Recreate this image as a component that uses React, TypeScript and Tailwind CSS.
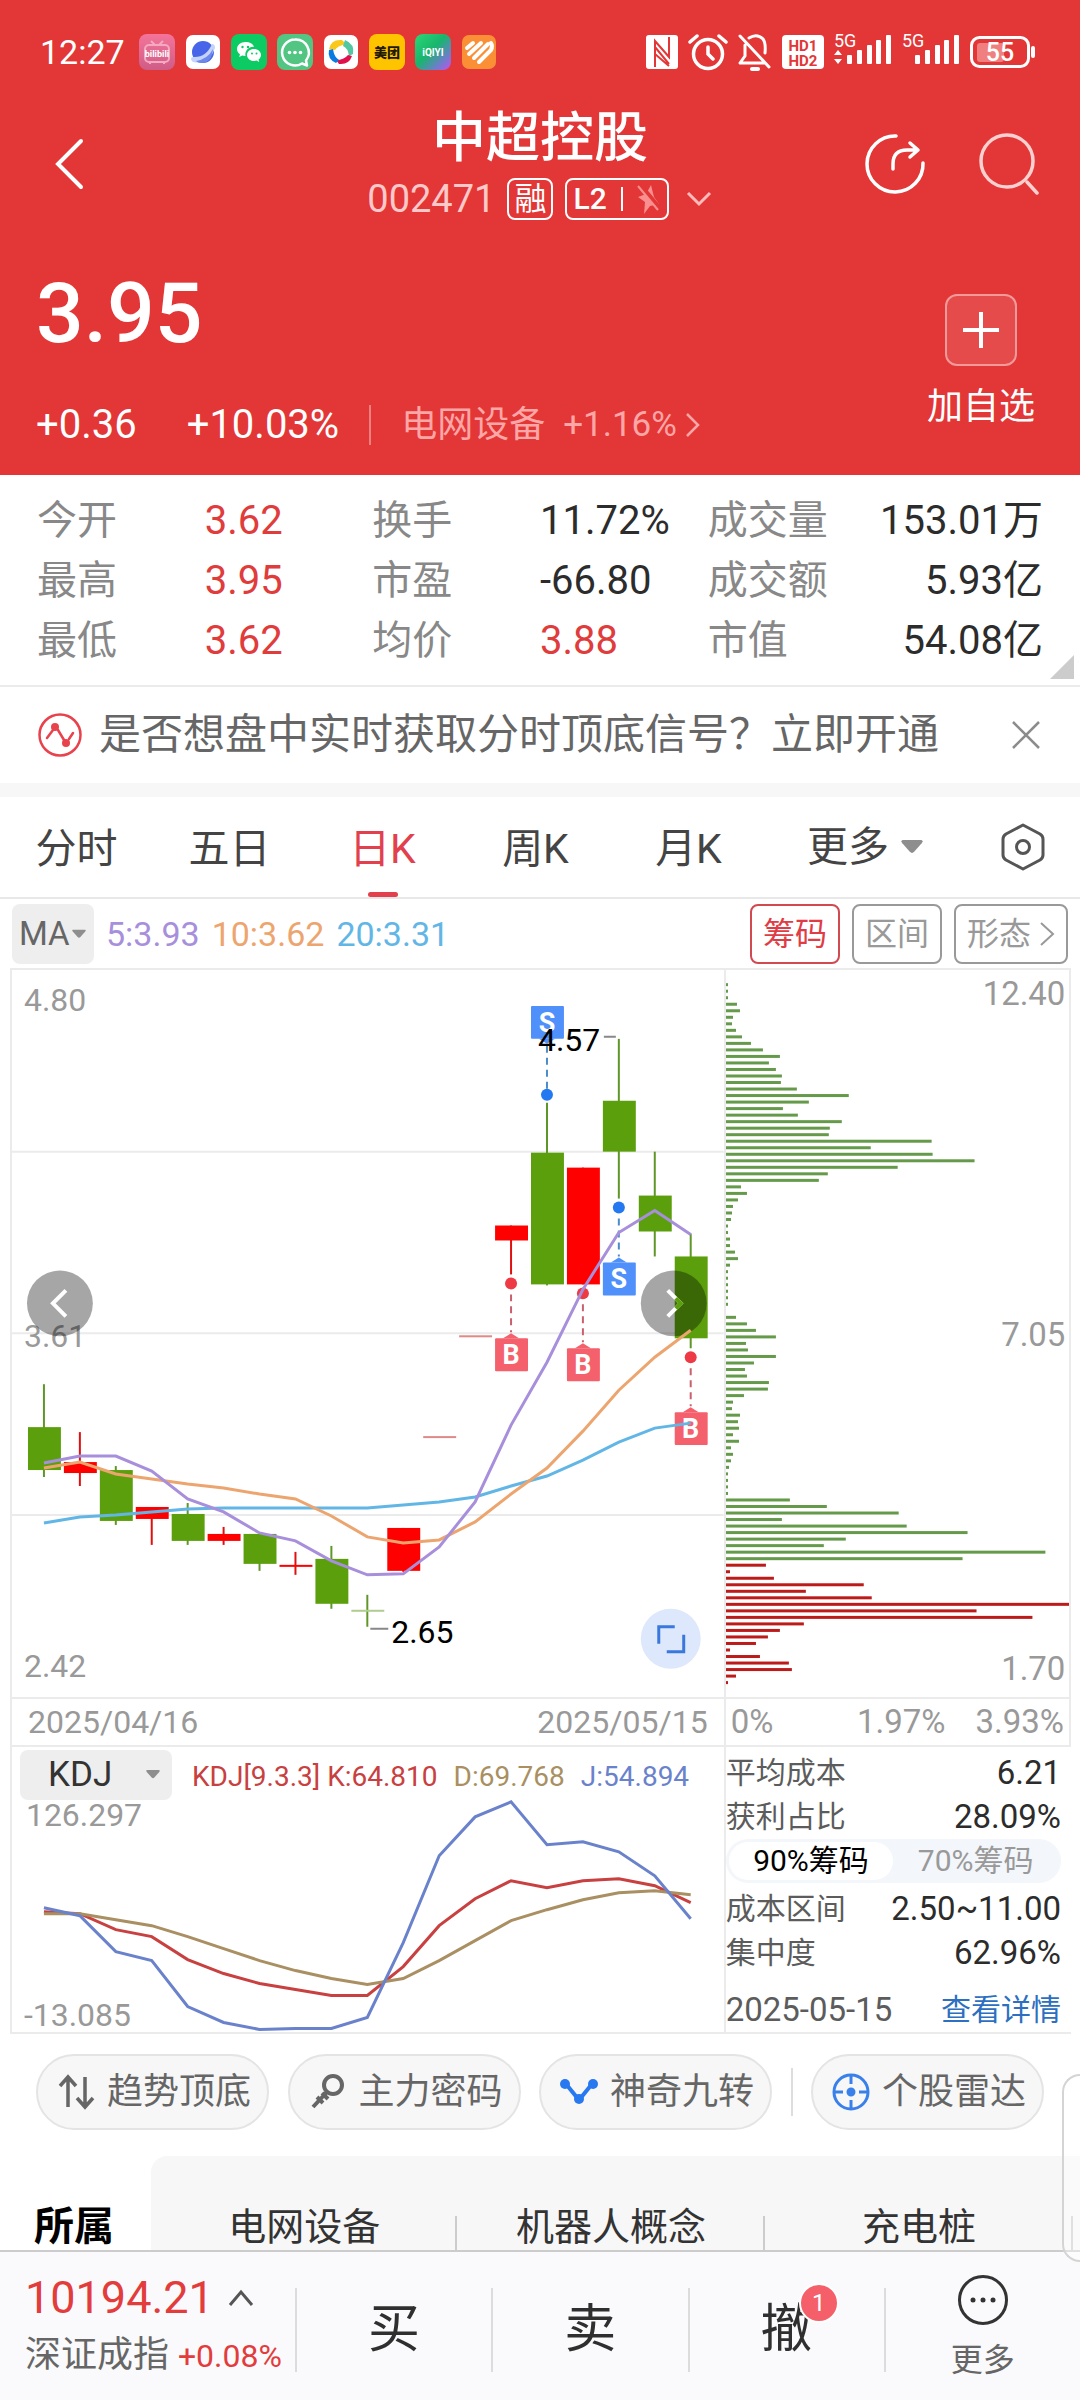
import React, { useState } from 'react';

type Candle = {
  up: boolean;
  high: number;
  top: number;
  bottom: number;
  low: number;
};

const candles: Candle[] = [
  { up: false, high: 415, top: 458, bottom: 501, low: 508 },
  { up: true, high: 463, top: 493, bottom: 504, low: 517 },
  { up: false, high: 497, top: 501, bottom: 552, low: 556 },
  { up: true, high: 538, top: 538, bottom: 550, low: 576 },
  { up: false, high: 534, top: 545, bottom: 572, low: 576 },
  { up: true, high: 558, top: 565, bottom: 572, low: 576 },
  { up: false, high: 565, top: 565, bottom: 595, low: 602 },
  { up: true, high: 583, top: 596, bottom: 598, low: 606 },
  { up: false, high: 577, top: 590, bottom: 635, low: 640 },
  { up: false, high: 626, top: 641, bottom: 642, low: 658 },
  { up: true, high: 559, top: 559, bottom: 602, low: 603 },
  { up: true, high: 467, top: 467, bottom: 468, low: 468 },
  { up: true, high: 366, top: 366, bottom: 367, low: 367 },
  { up: true, high: 256, top: 256, bottom: 271, low: 305 },
  { up: false, high: 133, top: 183, bottom: 315, low: 316 },
  { up: true, high: 198, top: 198, bottom: 315, low: 315 },
  { up: false, high: 69, top: 131, bottom: 182, low: 229 },
  { up: false, high: 182, top: 226, bottom: 262, low: 287 },
  { up: false, high: 264, top: 287, bottom: 369, low: 379 },
];

const ma5 = [494, 487, 487, 502, 530, 543, 564, 572, 592, 606, 605, 578, 533, 456, 393, 320, 263, 241, 265];
const ma10 = [499, 493, 505, 510, 515, 519, 525, 530, 547, 568, 574, 571, 553, 525, 499, 462, 421, 388, 361];
const ma20 = [554, 548, 546, 543, 540, 539, 539, 539, 539, 539, 536, 533, 528, 517, 507, 491, 473, 459, 454];

const kLine = [165, 167, 183, 190, 213, 227, 237, 243, 249, 249, 220, 179, 152, 134, 141, 134, 132, 139, 156];
const dLine = [167, 167, 173, 179, 190, 202, 214, 224, 232, 238, 232, 214, 194, 174, 163, 153, 146, 144, 148];
const jLine = [161, 169, 205, 214, 260, 276, 283, 282, 282, 271, 196, 109, 70, 55, 98, 95, 105, 129, 172];

const lossChips = [
  2, 2, 2, 11, 14, 7, 6, 10, 16, 25, 37, 54, 43, 50, 56, 55, 71, 123, 83, 57, 72, 116, 104, 103, 206, 145, 207, 249,
  172, 102, 93, 15, 21, 12, 7, 6, 5, 2, 2, 4, 4, 9, 12, 4, 2, 2, 2, 2, 2, 2, 0, 10, 21, 30, 50, 20, 22, 50, 28, 19,
  21, 43, 42, 18, 7, 6, 14, 12, 13, 7, 13, 5, 7, 5, 3, 2, 2, 2, 2, 64, 101, 173, 56, 181, 242, 120, 98, 320, 237,
];
const profitChips = [40, 4, 48, 138, 80, 146, 344, 251, 307, 78, 54, 42, 30, 4, 34, 63, 66, 10, 2];

const quotes = [
  { label: '今开', value: '3.62', red: true },
  { label: '换手', value: '11.72%', red: false },
  { label: '成交量', value: '153.01万', red: false },
  { label: '最高', value: '3.95', red: true },
  { label: '市盈', value: '-66.80', red: false },
  { label: '成交额', value: '5.93亿', red: false },
  { label: '最低', value: '3.62', red: true },
  { label: '均价', value: '3.88', red: true },
  { label: '市值', value: '54.08亿', red: false },
];

const periods = ['分时', '五日', '日K', '周K', '月K'];

const candleX = (i: number) => 32 + i * 36;
const toPoints = (line: number[]) => line.map((y, i) => `${candleX(i)},${y}`).join(' ');

function Caret({ className }: { className?: string }) {
  return (
    <svg viewBox="0 0 20 13" className={className} fill="#8e8e8e">
      <path d="M2 0h16q3 0 1 3l-7 8q-2 2-4 0L1 3q-2-3 1-3z" />
    </svg>
  );
}

function AppIcons() {
  return (
    <div className="flex items-center gap-[10px]">
      <svg viewBox="0 0 36 36" className="size-9">
        <defs>
          <linearGradient id="bili" x1="0" y1="0" x2="0" y2="1">
            <stop offset="0" stopColor="#f4749a" />
            <stop offset="1" stopColor="#cf5c87" />
          </linearGradient>
        </defs>
        <rect width="36" height="36" rx="8" fill="url(#bili)" />
        <rect x="6" y="11" width="24" height="17" rx="4" fill="none" stroke="#f3a9c0" strokeWidth="2" />
        <path d="M12 7l4 4M24 7l-4 4M11 28v2M25 28v2" stroke="#f3a9c0" strokeWidth="2" />
        <text x="18" y="23" fontSize="9" fontWeight="700" fill="#fff" textAnchor="middle">bilibili</text>
      </svg>
      <svg viewBox="0 0 36 36" className="size-9">
        <rect x="1" y="1" width="34" height="34" rx="7" fill="#fff" />
        <circle cx="18" cy="18" r="11" fill="#4765e8" />
        <path d="M8 23q13 1 19-13 3 0 3 4-3 11-15 14-8 2-9-3 0-2 2-2z" fill="#c4d3fb" />
        <path d="M11 27q12-2 17-12-1 14-12 14-3 0-5-2z" fill="#6d87ea" />
      </svg>
      <svg viewBox="0 0 36 36" className="size-9">
        <rect width="36" height="36" rx="8" fill="#0ccb63" />
        <path d="M14.500 8C9.500 8 6 11.300 6 15c0 2.200 1.100 4 3 5.300L8.200 23l3-1.500c1 .3 2.300.5 3.300.5-1-5 3-9.500 8.500-9.200C22 10 18.800 8 14.500 8z" fill="#fff" />
        <path d="M23 15c-4 0-7 2.700-7 6s3 6 7 6c.9 0 1.700-.1 2.500-.4L28.200 28l-.7-2.400C29 24.500 30 22.800 30 21c0-3.300-3-6-7-6z" fill="#fff" />
        <g fill="#0ccb63">
          <circle cx="11.500" cy="13" r="1.200" />
          <circle cx="17" cy="13" r="1.200" />
          <circle cx="21" cy="19.500" r="1" />
          <circle cx="25.500" cy="19.500" r="1" />
        </g>
      </svg>
      <svg viewBox="0 0 36 36" className="size-9">
        <rect width="36" height="36" rx="8" fill="#52c583" />
        <path d="M18 5.500a13 13 0 1 0 7 24l5 2-1-5A13 13 0 0 0 18 5.500z" fill="none" stroke="#fff" strokeWidth="2.500" strokeLinejoin="round" />
        <g fill="#fff">
          <circle cx="12.500" cy="18.500" r="1.800" />
          <circle cx="18" cy="18.500" r="1.800" />
          <circle cx="23.500" cy="18.500" r="1.800" />
        </g>
      </svg>
      <svg viewBox="0 0 36 36" className="size-9">
        <rect x="1" y="1" width="34" height="34" rx="7" fill="#fff" />
        <path d="M6 15q2-10 13-9l4 4q-9 2-11 6z" fill="#f9c81a" />
        <path d="M22 6q10 4 8 14l-4 2q-1-8-6-10z" fill="#52c7a0" />
        <path d="M29 22q-3 9-13 8l-3-4q8 0 12-5z" fill="#e0104c" />
        <path d="M13 29q-9-4-7-13l4-1q1 8 6 11z" fill="#0a7be0" />
      </svg>
      <svg viewBox="0 0 36 36" className="size-9">
        <rect width="36" height="36" rx="8" fill="#ffc400" />
        <text x="18" y="23" fontSize="13" fontWeight="900" fill="#221a00" textAnchor="middle">美团</text>
      </svg>
      <svg viewBox="0 0 36 36" className="size-9">
        <defs>
          <linearGradient id="iqiyi" x1="0" y1="0" x2="1" y2="1">
            <stop offset="0" stopColor="#2bd873" />
            <stop offset="0.450" stopColor="#18b56d" />
            <stop offset="0.750" stopColor="#6a7fc8" />
            <stop offset="1" stopColor="#c84ff0" />
          </linearGradient>
        </defs>
        <rect width="36" height="36" rx="8" fill="url(#iqiyi)" />
        <text x="18" y="22" fontSize="10" fontWeight="700" fill="#fff" textAnchor="middle">iQIYI</text>
      </svg>
      <svg viewBox="0 0 36 36" className="size-9">
        <rect x="1" y="1" width="34" height="34" rx="7" fill="#fb8f35" />
        <path d="M6 14l6-5M8 20L20 9M13 24L27 10" stroke="#fff" strokeWidth="4" strokeLinecap="round" />
        <path d="M18 28l12-12q2-4 0-7" stroke="#fff" strokeWidth="4" strokeLinecap="round" fill="none" />
      </svg>
    </div>
  );
}

function Signal({ arrows }: { arrows?: boolean }) {
  return (
    <svg viewBox="0 0 58 40" className="h-10 w-[58px]" fill="#fff">
      <text x="0" y="15" fontSize="18">5G</text>
      {arrows && <path d="M4 18l4 5H0zM4 32l4-5H0z" />}
      <rect x="13" y="23" width="5" height="9" rx="1" />
      <rect x="23" y="18" width="5" height="14" rx="1" />
      <rect x="33" y="13" width="5" height="19" rx="1" />
      <rect x="42" y="8" width="5" height="24" rx="1" />
      <rect x="52" y="3" width="5" height="29" rx="1" />
    </svg>
  );
}

function StatusBar() {
  return (
    <div className="flex items-center justify-between pr-[44px] pl-10">
      <div className="flex items-center gap-[14px]">
        <span className="text-[34px] leading-9">12:27</span>
        <AppIcons />
      </div>
      <div className="flex items-center gap-[10px]">
        <svg viewBox="0 0 32 34" className="h-[34px] w-8">
          <rect width="32" height="34" rx="3" fill="#fff" />
          <path d="M9 32V6l14 16V2M9 12l14 17M9 19l14 12" fill="none" stroke="#e33636" strokeWidth="2" />
        </svg>
        <svg viewBox="0 0 40 38" className="h-[38px] w-10" fill="none" stroke="#fff" strokeWidth="3.500" strokeLinecap="round">
          <circle cx="20" cy="21" r="14.500" />
          <path d="M20 14v7l5 5M2 9l7-6M38 9l-7-6" />
        </svg>
        <svg viewBox="0 0 34 38" className="h-[38px] w-[34px]" fill="none" stroke="#fff" strokeWidth="3" strokeLinecap="round" strokeLinejoin="round">
          <path d="M2 3l29 31M11 5q8-5 14 1 3 4 2 14M7 12v11l-5 7h24" />
          <path d="M14 36h6" strokeWidth="4" />
        </svg>
        <svg viewBox="0 0 42 34" className="h-[34px] w-[42px]">
          <rect width="42" height="34" rx="4" fill="#fff" />
          <text x="21" y="15.500" fontSize="15" fontWeight="700" fill="#e33636" textAnchor="middle">HD1</text>
          <text x="21" y="30.500" fontSize="15" fontWeight="700" fill="#e33636" textAnchor="middle">HD2</text>
        </svg>
        <Signal arrows />
        <Signal />
        <svg viewBox="0 0 66 34" className="h-[34px] w-[66px]">
          <rect x="1.500" y="2.500" width="57" height="29" rx="8" fill="none" stroke="#fff" strokeWidth="3" />
          <rect x="7" y="8" width="27" height="19" rx="3" fill="#f07f7f" />
          <rect x="61" y="11" width="4" height="12" rx="2" fill="#fff" />
          <text x="30" y="26" fontSize="25" fontWeight="500" fill="#fff" textAnchor="middle">55</text>
        </svg>
      </div>
    </div>
  );
}

function Header() {
  return (
    <header className="bg-[#e33636] pt-8 pb-[26px] text-white">
      <StatusBar />

      <div className="mt-[35px] grid grid-cols-[1fr_auto_1fr] items-center px-10">
        <button aria-label="返回" className="ml-3 justify-self-start">
          <svg viewBox="0 0 36 52" className="h-[52px] w-9" fill="none" stroke="#fff" strokeWidth="4" strokeLinecap="round">
            <path d="M29 3L6 26l23 23" />
          </svg>
        </button>
        <div className="flex flex-col items-center gap-[6px]">
          <h1 className="text-[54px] leading-[64px] font-medium">中超控股</h1>
          <div className="flex items-center gap-3">
            <span className="text-[38px] leading-[44px] text-[#ffc9c9]">002471</span>
            <span className="rounded-lg border-2 px-[5px] text-[32px] leading-[38px]">融</span>
            <span className="flex items-center gap-[14px] rounded-lg border-2 px-[6px] text-[30px] leading-[38px] font-medium">
              L2
              <span className="h-6 w-[2px] bg-white" />
              <svg viewBox="0 0 24 32" className="h-8 w-6">
                <path d="M14 2L9 11l-8 3 7 5-1 12 6-8 9-2-5-7z" fill="#f98f8f" />
                <path d="M3 2l20 24" stroke="#e33636" strokeWidth="5" />
                <path d="M1 3l20 24" stroke="#f98f8f" strokeWidth="2" />
              </svg>
            </span>
            <button aria-label="展开" className="ml-1">
              <svg viewBox="0 0 28 16" className="h-4 w-7" fill="none" stroke="#fbb" strokeWidth="3">
                <path d="M3 2l11 11L25 2" />
              </svg>
            </button>
          </div>
        </div>
        <div className="flex items-center gap-[52px] justify-self-end">
          <button aria-label="分享">
            <svg viewBox="0 0 62 62" className="size-[62px]" fill="none" stroke="#fff" strokeWidth="3.500" strokeLinecap="round" strokeLinejoin="round">
              <path d="M32 3a28 28 0 1 0 27 27" />
              <path d="M29 36v-5q0-14 14-14h10M46 10l8 7-8 7" />
            </svg>
          </button>
          <button aria-label="搜索">
            <svg viewBox="0 0 62 62" className="size-[62px]" fill="none" stroke="#ffd0d0" strokeWidth="3.500" strokeLinecap="round">
              <circle cx="29" cy="28" r="26" />
              <path d="M49 49l10 11" />
            </svg>
          </button>
        </div>
      </div>

      <div className="mt-[45px] flex items-end justify-between pr-[45px] pl-9">
        <div>
          <p className="text-[84px] leading-[96px] font-medium">3.95</p>
          <div className="mt-[39px] flex items-center text-[40px] leading-[48px]">
            <span>+0.36</span>
            <span className="ml-[50px]">+10.03%</span>
            <span className="ml-[30px] h-10 w-[2px] bg-[#f08080]" />
            <a href="#sector" className="ml-[30px] flex items-center text-[36px] text-[#ffa6a6]">
              电网设备
              <span className="ml-[18px] text-[35px]">+1.16%</span>
              <svg viewBox="0 0 16 26" className="ml-2 h-[26px] w-4" fill="none" stroke="#ffa6a6" strokeWidth="2.500">
                <path d="M2 2l11 11L2 24" />
              </svg>
            </a>
          </div>
        </div>
        <button className="flex flex-col items-center gap-[14px] pb-[15px] text-[36px] leading-[54px]">
          <span className="flex size-[72px] items-center justify-center rounded-xl border-2 border-[#f19a9a] bg-[#e64b4b]">
            <svg viewBox="0 0 36 36" className="size-9" stroke="#fff" strokeWidth="4">
              <path d="M18 0v36M0 18h36" />
            </svg>
          </span>
          加自选
        </button>
      </div>
    </header>
  );
}

function Quotes() {
  return (
    <section className="relative border-b-2 border-[#ebebeb] pt-4 pb-[14px]">
      <dl className="grid grid-cols-3 px-[37px] text-[40px] leading-[60px]">
        {quotes.map((item, index) => (
          <div key={item.label} className={index % 3 === 2 ? 'flex justify-between' : 'flex'}>
            <dt className={index % 3 === 2 ? 'text-[#888]' : 'w-1/2 text-[#888]'}>{item.label}</dt>
            <dd className={item.red ? 'text-[#e03c3c]' : 'text-[#2c2c2c]'}>{item.value}</dd>
          </div>
        ))}
      </dl>
      <svg viewBox="0 0 24 24" className="absolute right-[6px] bottom-[6px] size-6" fill="#ccc">
        <path d="M24 0v24H0z" />
      </svg>
    </section>
  );
}

function Notice() {
  return (
    <section className="flex items-center border-b-[14px] border-[#f7f7f7] py-[18px] pr-9 pl-[38px] text-[#666]">
      <svg viewBox="0 0 44 44" className="size-11" fill="none" stroke="#e8424d" strokeWidth="2.500">
        <circle cx="22" cy="22" r="20.500" />
        <path d="M9 25l6-8M20 17l6 10M31 26l4-6" strokeLinecap="round" />
        <circle cx="17" cy="14" r="4" fill="#e8424d" stroke="none" />
        <circle cx="28" cy="30" r="4" fill="#e8424d" stroke="none" />
      </svg>
      <a href="#signal" className="ml-[17px] text-[42px] leading-[60px] whitespace-nowrap">
        是否想盘中实时获取分时顶底信号？立即开通
      </a>
      <button aria-label="关闭" className="ml-auto">
        <svg viewBox="0 0 36 36" className="size-9" stroke="#8c8c8c" strokeWidth="2.500">
          <path d="M5 5l26 26M31 5L5 31" />
        </svg>
      </button>
    </section>
  );
}

function PeriodTabs() {
  const [period, setPeriod] = useState('日K');

  return (
    <nav className="flex items-stretch border-b-2 border-[#e8e8e8] pr-[34px] text-[41px] leading-[60px] text-[#444]">
      {periods.map((name) => (
        <button
          key={name}
          onClick={() => setPeriod(name)}
          className={`relative w-[153px] pt-[22px] pb-[18px] ${name === period ? 'text-[#e2404c]' : ''}`}
        >
          {name}
          {name === period && (
            <span className="absolute bottom-0 left-1/2 h-[5px] w-[30px] -translate-x-1/2 rounded-full bg-[#e2404c]" />
          )}
        </button>
      ))}
      <button className="ml-[42px] flex items-center gap-3">
        更多
        <Caret className="h-[14px] w-[22px]" />
      </button>
      <button aria-label="设置" className="ml-auto">
        <svg viewBox="0 0 46 48" className="h-12 w-[46px]" fill="none" stroke="#555" strokeWidth="3" strokeLinejoin="round">
          <path d="M23 2l17 9q3 2 3 5v16q0 3-3 5l-17 9-17-9q-3-2-3-5V16q0-3 3-5z" />
          <circle cx="23" cy="24" r="6.500" />
        </svg>
      </button>
    </nav>
  );
}

function ChartToolbar() {
  return (
    <div className="flex items-center px-3 py-1 text-[34px] leading-[60px]">
      <label className="relative">
        <select aria-label="均线" className="w-[82px] appearance-none rounded-lg bg-[#eee] pl-[7px] text-[33px] leading-[60px] text-[#666] outline-none">
          <option>MA</option>
        </select>
        <Caret className="pointer-events-none absolute top-1/2 right-2 h-[9px] w-[14px] -translate-y-1/2" />
      </label>
      <span className="ml-3 text-[#a78fdc]">5:3.93</span>
      <span className="ml-3 text-[#eda56f]">10:3.62</span>
      <span className="ml-3 text-[#62b6e6]">20:3.31</span>
      <div className="ml-auto flex gap-3 text-[32px] leading-[56px] text-[#999]">
        <button className="rounded-lg border-2 border-[#d04a50] px-[11px] text-[#e03c46]">筹码</button>
        <button className="rounded-lg border-2 border-[#999] px-[11px]">区间</button>
        <button className="flex items-center gap-2 rounded-lg border-2 border-[#999] px-[11px]">
          形态
          <svg viewBox="0 0 16 26" className="h-[26px] w-4" fill="none" stroke="#999" strokeWidth="2">
            <path d="M2 2l12 11L2 24" />
          </svg>
        </button>
      </div>
    </div>
  );
}

type MarkerProps = { x: number; dot: number; box: number; kind: 'B' | 'S' };

function Marker({ x, dot, box, kind }: MarkerProps) {
  const buy = kind === 'B';
  const above = box < dot;
  const tip = above ? `M${x - 8} ${box + 33}l8 5 8-5z` : `M${x - 8} ${box}l8-5 8 5z`;

  return (
    <g>
      <path
        d={above ? `M${x} ${dot - 6}V${box + 38}` : `M${x} ${dot + 11}V${box - 6}`}
        stroke={buy ? '#c9606c' : '#4c8cc8'}
        strokeWidth="2"
        strokeDasharray="7 5"
      />
      <circle cx={x} cy={dot} r="6" fill={buy ? '#ee3a45' : '#2478f0'} />
      <path d={tip} fill={buy ? '#f4606c' : '#5090fa'} />
      <rect x={x - 16} y={box} width="33" height="33" rx="1" fill={buy ? '#f4606c' : '#5090fa'} />
      <text x={x} y={box + 26} fontSize="27" fontWeight="700" fill="#fff" textAnchor="middle">{kind}</text>
    </g>
  );
}

function KLineChart() {
  return (
    <svg viewBox="0 0 713 728" className="block w-full" fontSize="32">
      <path d="M0 182h713M0 364h713M0 546h713" stroke="#ebebeb" strokeWidth="2" />
      {candles.map((c, i) => {
        const x = candleX(i);
        const color = c.up ? '#ff0000' : '#5ba00c';
        const flat = c.bottom - c.top < 2;
        return (
          <g key={i}>
            {c.low - c.high > 2 && <path d={`M${x} ${c.high}V${c.low}`} stroke={c.up ? '#e01010' : '#5f9628'} strokeWidth="2" />}
            <rect
              x={x - 16}
              y={c.top}
              width="33"
              height={Math.max(c.bottom - c.top, 2)}
              fill={flat ? (c.up ? '#dd8a88' : '#b0cc90') : color}
            />
          </g>
        );
      })}
      <Marker x={536} dot={125} box={36} kind="S" />
      <Marker x={608} dot={238} box={293} kind="S" />
      <Marker x={500} dot={314} box={369} kind="B" />
      <Marker x={572} dot={324} box={379} kind="B" />
      <Marker x={680} dot={388} box={443} kind="B" />
      <g fill="#999">
        <text x="12" y="41">4.80</text>
        <text x="12" y="378">3.61</text>
        <text x="12" y="708">2.42</text>
      </g>
      <circle cx="48" cy="334" r="33" fill="#000" fillOpacity="0.350" />
      <circle cx="663" cy="334" r="33" fill="#000" fillOpacity="0.350" />
      <path d="M54 321l-13 13 13 13" fill="none" stroke="#fff" strokeWidth="4" />
      <path d="M657 321l13 13-13 13" fill="none" stroke="#fff" strokeWidth="4" />
      <path d="M665 329l5 5-5 5" fill="none" stroke="#5ba00c" strokeWidth="4" />
      <g fill="none" strokeWidth="3">
        <polyline points={toPoints(ma20)} stroke="#62b6e6" />
        <polyline points={toPoints(ma10)} stroke="#eda56f" />
        <polyline points={toPoints(ma5)} stroke="#a78fdc" />
      </g>
      <path d="M593 67h12M359 660h18" stroke="#888" strokeWidth="2" />
      <text x="527" y="81">4.57</text>
      <text x="380" y="674">2.65</text>
      <circle cx="660" cy="670" r="30" fill="#dde8fc" />
      <path d="M648 675v-17h16M673 666v17h-17" fill="none" stroke="#3b78dc" strokeWidth="3" />
    </svg>
  );
}

function ChipChart() {
  return (
    <svg viewBox="0 0 344 728" className="block w-full" fontSize="33">
      {[...lossChips, ...profitChips].map((length, i) => (
        <rect
          key={i}
          x="0"
          y={13.2 + i * 6.535}
          width={length}
          height="3"
          fill={i < lossChips.length ? '#649a49' : '#bd1a1a'}
        />
      ))}
      <g fill="#999" textAnchor="end">
        <text x="340" y="35">12.40</text>
        <text x="340" y="377">7.05</text>
        <text x="340" y="711">1.70</text>
      </g>
    </svg>
  );
}

function KdjPanel() {
  return (
    <div className="relative">
      <svg viewBox="0 0 713 286" className="block w-full" fontSize="32">
        <g fill="none" strokeWidth="3">
          <polyline points={toPoints(kLine)} stroke="#c84040" />
          <polyline points={toPoints(dLine)} stroke="#a98f62" />
          <polyline points={toPoints(jLine)} stroke="#6a82cc" />
        </g>
        <g fill="#999">
          <text x="14" y="79">126.297</text>
          <text x="12" y="280">-13.085</text>
        </g>
      </svg>
      <div className="absolute inset-x-0 top-[3px] flex items-center pl-2 text-[28px] whitespace-nowrap">
        <label className="relative">
          <select aria-label="指标" className="w-[152px] appearance-none rounded-lg bg-[#eee] pl-7 text-[35px] leading-[50px] text-[#333] outline-none">
            <option>KDJ</option>
          </select>
          <Caret className="pointer-events-none absolute top-5 right-3 h-[9px] w-[14px]" />
        </label>
        <span className="ml-5 pt-1 text-[#c84040]">KDJ[9.3.3] K:64.810</span>
        <span className="ml-4 pt-1 text-[#a98f62]">D:69.768</span>
        <span className="ml-4 pt-1 text-[#6a82cc]">J:54.894</span>
      </div>
    </div>
  );
}

function ChipStats() {
  const [range, setRange] = useState(90);
  const on = 'flex-1 rounded-full bg-white text-black';
  const off = 'flex-1 rounded-full text-[#999]';

  return (
    <div className="flex h-full flex-col pt-1 pr-[10px] text-[30px] leading-[44px] text-[#5c5c5c]">
      <p className="flex justify-between">
        平均成本<span className="text-[33px] text-[#2c2c2c]">6.21</span>
      </p>
      <p className="flex justify-between">
        获利占比<span className="text-[33px] text-[#2c2c2c]">28.09%</span>
      </p>
      <div className="flex rounded-full bg-[#f3f6fa] p-[3px] text-[30px] leading-[38px]">
        <button onClick={() => setRange(90)} className={range === 90 ? on : off}>90%筹码</button>
        <button onClick={() => setRange(70)} className={range === 70 ? on : off}>70%筹码</button>
      </div>
      <p className="mt-1 flex justify-between">
        成本区间<span className="text-[33px] text-[#2c2c2c]">2.50~11.00</span>
      </p>
      <p className="flex justify-between">
        集中度<span className="text-[33px] text-[#2c2c2c]">62.96%</span>
      </p>
      <p className="mt-auto flex justify-between">
        <span className="text-[33px]">2025-05-15</span>
        <a href="#detail" className="text-[#2d6fc0]">查看详情</a>
      </p>
    </div>
  );
}

function ChartArea() {
  return (
    <section className="mr-[9px] ml-[10px] grid grid-cols-[715fr_346fr] border-t-2 border-b-2 border-l-2 border-[#ebebeb]">
      <div className="border-r-2 border-[#ebebeb]">
        <KLineChart />
      </div>
      <div className="border-r-2 border-[#ebebeb]">
        <ChipChart />
      </div>
      <div className="flex justify-between border-y-2 border-r-2 border-[#ebebeb] px-4 text-[32px] leading-[46px] text-[#999]">
        <span>2025/04/16</span>
        <span>2025/05/15</span>
      </div>
      <div className="flex border-y-2 border-r-2 border-[#ebebeb] px-[5px] text-[33px] leading-[46px] text-[#999]">
        <span>0%</span>
        <span className="mr-[30px] ml-auto">1.97%</span>
        <span>3.93%</span>
      </div>
      <div className="border-r-2 border-[#ebebeb]">
        <KdjPanel />
      </div>
      <ChipStats />
    </section>
  );
}

const pill = 'flex items-center gap-3 rounded-full border-2 border-[#e4e4e4] bg-[#f7f7f7] pr-4 pl-[19px]';

function Shortcuts() {
  return (
    <section className="relative flex items-center justify-between px-9 pt-5 pb-[26px] text-[36px] leading-[72px] whitespace-nowrap text-[#666]">
      <button className={pill}>
        <svg viewBox="0 0 38 38" className="size-[38px]" fill="none" stroke="#666" strokeWidth="3.500">
          <path d="M11 34V5M3 13l8-9 8 9M28 4v29M20 25l8 9 8-9" />
        </svg>
        趋势顶底
      </button>
      <button className={pill}>
        <svg viewBox="0 0 38 38" className="size-[38px]" fill="none" stroke="#666" strokeWidth="4">
          <circle cx="24" cy="12" r="9" />
          <path d="M18 19L4 34M8 24l6 6M13 20l6 6" />
        </svg>
        主力密码
      </button>
      <button className={pill}>
        <svg viewBox="0 0 38 38" className="size-[38px]" fill="none" stroke="#2878f0" strokeWidth="4">
          <path d="M6 11l13 16L32 11" />
          <g fill="#2878f0" stroke="none">
            <circle cx="5" cy="11" r="5" />
            <circle cx="33" cy="11" r="5" />
            <circle cx="19" cy="26" r="5" />
          </g>
        </svg>
        神奇九转
      </button>
      <span className="h-12 w-[2px] bg-[#ddd]" />
      <button className={pill}>
        <svg viewBox="0 0 38 38" className="size-[38px]" fill="none" stroke="#3a80ea" strokeWidth="3">
          <circle cx="19" cy="19" r="17" />
          <path d="M19 2v9M19 27v9M2 19h9M27 19h9" />
          <circle cx="19" cy="19" r="3" fill="#3a80ea" />
        </svg>
        个股雷达
      </button>
      <span className="absolute top-10 right-0 z-10 h-[188px] w-[18px] rounded-l-[24px] border-2 border-r-0 border-[#d4d4d4] bg-white/40" />
    </section>
  );
}

function SectorTabs() {
  return (
    <nav className="flex text-[38px] leading-[46px] text-[#333]">
      <h2 className="w-[14%] pt-[48px] pl-[34px] text-[40px] font-bold text-black">所属</h2>
      <div className="grid flex-1 grid-cols-[306fr_308fr_308fr_7fr] items-end rounded-tl-2xl bg-[#f7f7f7] pt-[46px] text-center">
        <a href="#grid" className="bg-[linear-gradient(#ccc,#ccc)] bg-[length:2px_34px] bg-right-bottom bg-no-repeat">电网设备</a>
        <a href="#robot" className="bg-[linear-gradient(#ccc,#ccc)] bg-[length:2px_34px] bg-right-bottom bg-no-repeat">机器人概念</a>
        <a href="#charger" className="bg-[linear-gradient(#ccc,#ccc)] bg-[length:2px_34px] bg-right-bottom bg-no-repeat">充电桩</a>
      </div>
    </nav>
  );
}

function TradeBar() {
  return (
    <footer className="flex flex-1 items-center border-t-2 border-[#ccc] bg-[#fafafc] pt-4 pb-[11px] text-[#2f2f2f]">
      <div className="w-[295px] pb-2 pl-[25px] whitespace-nowrap">
        <p className="flex items-center gap-[14px] text-[45px] leading-[60px] text-[#e33c3c]">
          10194.21
          <svg viewBox="0 0 26 18" className="h-[18px] w-[26px]" fill="none" stroke="#555" strokeWidth="3">
            <path d="M2 16L13 3l11 13" />
          </svg>
        </p>
        <p className="text-[36px] leading-[54px] text-[#666]">
          深证成指 <span className="text-[32px] text-[#e33c3c]">+0.08%</span>
        </p>
      </div>
      <button className="flex-1 border-x-2 border-[#dcdcdc] text-[52px] leading-[84px]">买</button>
      <button className="flex-1 border-r-2 border-[#dcdcdc] text-[52px] leading-[84px]">卖</button>
      <button className="flex-1 border-r-2 border-[#dcdcdc] text-[52px] leading-[84px]">
        <span className="relative">
          撤
          <span className="absolute -top-4 -right-[26px] flex size-10 items-center justify-center rounded-full border-2 border-white bg-[#f45f69] text-[24px] leading-none text-white">1</span>
        </span>
      </button>
      <button className="flex flex-1 flex-col items-center gap-2 text-[32px] leading-[52px] text-[#666]">
        <svg viewBox="0 0 52 52" className="size-[52px]" fill="#333">
          <circle cx="26" cy="26" r="23.500" fill="none" stroke="#333" strokeWidth="3" />
          <circle cx="16" cy="26" r="2.500" />
          <circle cx="26" cy="26" r="2.500" />
          <circle cx="36" cy="26" r="2.500" />
        </svg>
        更多
      </button>
    </footer>
  );
}

function App() {
  return (
    <div className="flex min-h-screen flex-col overflow-hidden bg-white font-[Roboto,'Noto_Sans_CJK_SC',sans-serif]">
      <Header />
      <Quotes />
      <Notice />
      <PeriodTabs />
      <ChartToolbar />
      <ChartArea />
      <Shortcuts />
      <SectorTabs />
      <TradeBar />
    </div>
  );
}

export default App;
